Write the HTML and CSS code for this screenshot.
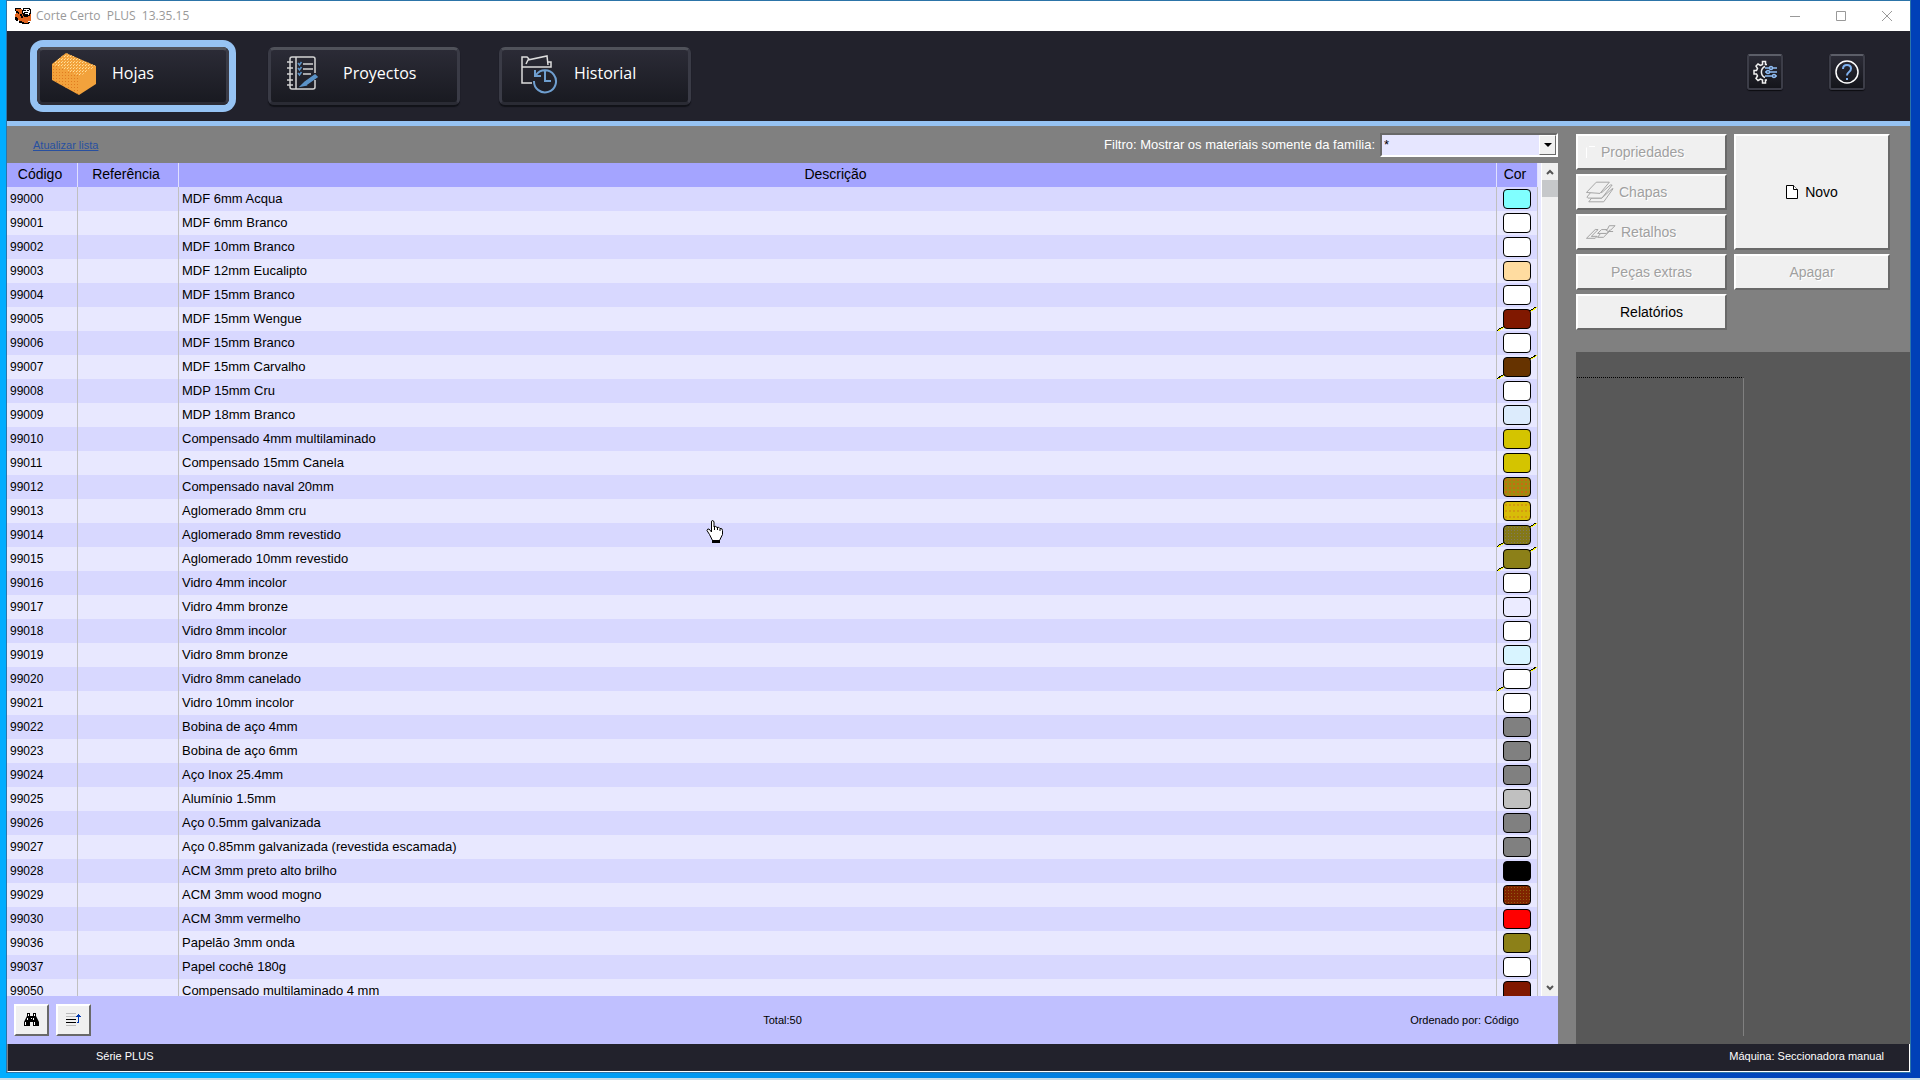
FILE: index.html
```html
<!DOCTYPE html>
<html lang="pt">
<head>
<meta charset="utf-8">
<title>Corte Certo PLUS 13.35.15</title>
<link rel="stylesheet" href="styles.css">
</head>
<body>
<div class="window">
  <header class="titlebar">
    <svg class="app-icon" width="16" height="16" viewBox="0 0 16 16" shape-rendering="crispEdges"><path fill="#e0641e" d="M1 1h6v4h9v8h-3v2H8v-1H4v-2H1V9H0V6h1z"/><path fill="#000" d="M0 0h6v1H1v2H0zM1 3h2v1h1v2H3V5H1zM0 9h2v1h1v3H1v-1H0zM4 13h3v1h2v1h4v-1h2v1h-1v1H7v-1H4zM8 0h7v1h1v5h-1v2h-2v1H9V8H8V6H7V2h1zM5 6h2v2h1v2H6V8H5z"/><path fill="#fff" d="M9 1h5v1h1v3h-1v2h-4V5H8V3h1z"/><path fill="#000" d="M9 2h2v1H9zM12 2h2v1h-2zM9 4h4v1H9zM10 6h3v1h-3z"/></svg>
    <span class="app-name">Corte Certo&nbsp; PLUS&nbsp; 13.35.15</span>
    <div class="win-controls">
      <button type="button" aria-label="Minimizar"><svg width="10" height="10"><path d="M0 5.500h10"/></svg></button>
      <button type="button" aria-label="Maximizar"><svg width="10" height="10"><path d="M.5.5h9v9h-9z"/></svg></button>
      <button type="button" aria-label="Fechar"><svg width="10" height="10"><path d="M0 0l10 10M10 0L0 10"/></svg></button>
    </div>
  </header>

  <div class="ribbon">
    <nav class="tabs">
      <button type="button" class="tab active">
        <svg width="44" height="42" viewBox="0 0 44 42"><path fill="#f2a23c" d="M0 11L14 0l30 13v18L27 42 0 27z"/><path fill="url(#dots-light)" d="M0 11L14 0l30 13-16 10z"/><path fill="url(#dots-dark)" d="M0 11l28 12-1 19L0 27z"/>
          <defs>
            <pattern id="dots-light" width="3" height="3" patternUnits="userSpaceOnUse"><path fill="#ffe2a0" d="M0 0h1v1H0z"/><path fill="#ffd080" d="M1 2h1v1H1z"/></pattern>
            <pattern id="dots-dark" width="3" height="3" patternUnits="userSpaceOnUse"><path fill="#e07c20" d="M1 1h1v1H1z"/></pattern>
          </defs>
        </svg>
        <span>Hojas</span>
      </button>
      <button type="button" class="tab">
        <svg width="44" height="42" viewBox="0 0 44 42" fill="none" stroke="#d4d4d4" stroke-width="1.500"><path d="M32 27v7q0 2-2 2H9q-2 0-2-2V6q0-2 2-2h21q2 0 2 2v14M13 4v32M4 9h6M4 15h6M4 21h6M4 27h6M4 32h6M20 11h10M20 16h10M20 21h8"/><path stroke="#5b93c8" d="M15 10l1.500 2 2-3M15 15l1.500 2 2-3M15 20l1.500 2 2-3"/><path fill="#5b93c8" stroke="#5b93c8" d="M22 29l10-7 2 2-10 7zM18 33l3-3 2 2z"/></svg>
        <span>Proyectos</span>
      </button>
      <button type="button" class="tab">
        <svg width="44" height="42" viewBox="0 0 44 42" fill="none" stroke="#dcdcdc" stroke-width="1.500"><path d="M18 30H8V4h5l2 2M8 14h29V9h-3M12 11l2-4 19-4 1 9"/><path stroke="#6f9fd0" stroke-width="2" d="M22 22a11 11 0 1 1-2 6M21 17v6h6M31 18v10h6"/></svg>
        <span>Historial</span>
      </button>
    </nav>
    <div class="tools">
      <button type="button" class="tool" aria-label="Configurações"><svg width="24" height="24" viewBox="0 0 24 24" fill="none" stroke="#f0f0f0" stroke-width="1.500"><path d="M12 6.500a6 6 0 0 0 0 11M14 4.500h-1.500V1.500h-3v3L7.500 5.500 5 4 3 6l1.500 2.500-1 2H1v3.500h2.500l1 2L3 18.500l2 2 2.500-1.500 2 1v3h3v-3H14"/><path stroke="#8fbcf2" d="M12 8h4M20 8h4M12 12h1M17 12h7M12 16h7M23 16h1"/><circle cx="18" cy="8" r="1.500" stroke="#8fbcf2"/><circle cx="15" cy="12" r="1.500" stroke="#8fbcf2"/><circle cx="21" cy="16" r="1.500" stroke="#8fbcf2"/></svg></button>
      <button type="button" class="tool" aria-label="Ajuda"><svg width="24" height="24" viewBox="0 0 24 24" fill="none" stroke="#fff" stroke-width="1.500"><circle cx="12" cy="12" r="11"/><path stroke="#7fb2f0" stroke-width="2" d="M8 9q0-4 4-4t4 3.500q0 2-2 3.500t-2 3.500M12 18v2"/></svg></button>
    </div>
  </div>

  <div class="main">
    <section class="list">
      <div class="filter-bar">
        <a href="#lista">Atualizar lista</a>
        <label for="familia">Filtro: Mostrar os materiais somente da família:</label>
        <div class="select-box">
          <select id="familia"><option>*</option></select>
          <span class="drop"><svg width="8" height="4"><path d="M0 0h8L4 4z"/></svg></span>
        </div>
      </div>

      <div class="grid-area" id="lista">
        <div class="grid-view">
          <table>
            <colgroup><col class="c-code"><col class="c-ref"><col><col class="c-color"></colgroup>
            <thead><tr><th>Código</th><th>Referência</th><th>Descrição</th><th>Cor</th></tr></thead>
            <tbody>
              <tr><td>99000</td><td></td><td>MDF 6mm Acqua</td><td><i class="aqua"></i></td></tr>
              <tr><td>99001</td><td></td><td>MDF 6mm Branco</td><td><i></i></td></tr>
              <tr><td>99002</td><td></td><td>MDF 10mm Branco</td><td><i></i></td></tr>
              <tr><td>99003</td><td></td><td>MDF 12mm Eucalipto</td><td><i class="peach"></i></td></tr>
              <tr><td>99004</td><td></td><td>MDF 15mm Branco</td><td><i></i></td></tr>
              <tr><td>99005</td><td></td><td>MDF 15mm Wengue</td><td class="grain"><i class="maroon"></i></td></tr>
              <tr><td>99006</td><td></td><td>MDF 15mm Branco</td><td><i></i></td></tr>
              <tr><td>99007</td><td></td><td>MDF 15mm Carvalho</td><td class="grain"><i class="brown"></i></td></tr>
              <tr><td>99008</td><td></td><td>MDP 15mm Cru</td><td><i></i></td></tr>
              <tr><td>99009</td><td></td><td>MDP 18mm Branco</td><td><i class="ice"></i></td></tr>
              <tr><td>99010</td><td></td><td>Compensado 4mm multilaminado</td><td><i class="yellow"></i></td></tr>
              <tr><td>99011</td><td></td><td>Compensado 15mm Canela</td><td><i class="yellow"></i></td></tr>
              <tr><td>99012</td><td></td><td>Compensado naval 20mm</td><td><i class="naval"></i></td></tr>
              <tr><td>99013</td><td></td><td>Aglomerado 8mm cru</td><td><i class="raw"></i></td></tr>
              <tr><td>99014</td><td></td><td>Aglomerado 8mm revestido</td><td class="grain"><i class="coated"></i></td></tr>
              <tr><td>99015</td><td></td><td>Aglomerado 10mm revestido</td><td class="grain"><i class="olive"></i></td></tr>
              <tr><td>99016</td><td></td><td>Vidro 4mm incolor</td><td><i></i></td></tr>
              <tr><td>99017</td><td></td><td>Vidro 4mm bronze</td><td><i class="lilac"></i></td></tr>
              <tr><td>99018</td><td></td><td>Vidro 8mm incolor</td><td><i></i></td></tr>
              <tr><td>99019</td><td></td><td>Vidro 8mm bronze</td><td><i class="sky"></i></td></tr>
              <tr><td>99020</td><td></td><td>Vidro 8mm canelado</td><td class="grain"><i></i></td></tr>
              <tr><td>99021</td><td></td><td>Vidro 10mm incolor</td><td><i></i></td></tr>
              <tr><td>99022</td><td></td><td>Bobina de aço 4mm</td><td><i class="gray"></i></td></tr>
              <tr><td>99023</td><td></td><td>Bobina de aço 6mm</td><td><i class="gray"></i></td></tr>
              <tr><td>99024</td><td></td><td>Aço Inox 25.4mm</td><td><i class="gray"></i></td></tr>
              <tr><td>99025</td><td></td><td>Alumínio 1.5mm</td><td><i class="silver"></i></td></tr>
              <tr><td>99026</td><td></td><td>Aço 0.5mm galvanizada</td><td><i class="gray"></i></td></tr>
              <tr><td>99027</td><td></td><td>Aço 0.85mm galvanizada (revestida escamada)</td><td><i class="gray"></i></td></tr>
              <tr><td>99028</td><td></td><td>ACM 3mm preto alto brilho</td><td><i class="black"></i></td></tr>
              <tr><td>99029</td><td></td><td>ACM 3mm wood mogno</td><td><i class="mahogany"></i></td></tr>
              <tr><td>99030</td><td></td><td>ACM 3mm vermelho</td><td><i class="red"></i></td></tr>
              <tr><td>99036</td><td></td><td>Papelão 3mm onda</td><td><i class="olive"></i></td></tr>
              <tr><td>99037</td><td></td><td>Papel cochê 180g</td><td><i></i></td></tr>
              <tr><td>99050</td><td></td><td>Compensado multilaminado 4 mm</td><td><i class="maroon"></i></td></tr>
            </tbody>
          </table>
        </div>
        <div class="scrollbar">
          <button type="button" aria-label="Subir"><svg width="8" height="6"><path d="M1 5l3-3 3 3"/></svg></button>
          <div class="thumb"></div>
          <button type="button" class="down" aria-label="Descer"><svg width="8" height="6"><path d="M1 1l3 3 3-3"/></svg></button>
        </div>
      </div>

      <footer class="list-footer">
        <div class="list-actions">
          <button type="button" class="raised" aria-label="Localizar"><svg width="15" height="14" viewBox="0 0 15 14"><path d="M3 0h3v3h3V0h3v3l1 2 2 4v4H9V9H6v4H0V9l2-4 1-2z"/><path fill="#fff" d="M4 1h1v2H4zM10 1h1v2h-1zM3 5h1v2H3zM9 5h1v2H9zM1 9h1v3H1zM10 9h1v3h-1zM7 5h1v1H7z"/></svg></button>
          <button type="button" class="raised" aria-label="Ordenar"><svg width="16" height="14" viewBox="0 0 16 14" fill="none"><path stroke="#bbb" d="M0 .5h10M0 3.500h10M0 12.500h10"/><path stroke="#000" d="M0 6.500h10M0 9.500h10"/><path stroke="#0038b0" d="M12.500 1v9M10 3.500h5M11 2.500h3M11 9.500h2"/></svg></button>
        </div>
        <span>Total:50</span>
        <span class="order">Ordenado por: Código</span>
      </footer>
    </section>

    <aside class="side">
      <div class="actions">
        <button type="button" class="raised left" disabled><svg width="10" height="12" fill="none" stroke="#fff"><path d="M.5 12V1.500M3 .5h6"/></svg>Propriedades</button>
        <button type="button" class="raised new"><svg width="12" height="14" viewBox="0 0 12 14" fill="#fff" stroke="#000"><path d="M.5.500h7l4 4v9H.5z"/><path d="M7.500.500v4h4"/></svg>Novo</button>
        <button type="button" class="raised left" disabled><svg width="28" height="22" viewBox="0 0 30 22" fill="#f0f0f0" stroke="#a0a0a0"><path d="M3 21.500l3-4h11l11-10h1l-10 14z"/><path d="M1 16.500l4-5h12l9-8h2L17 17.500H2z"/><path d="M.5 11.500L11 .5h14L15 12.500z"/></svg>Chapas</button>
        <button type="button" class="raised left" disabled><svg width="30" height="14" viewBox="0 0 31 14" fill="#f0f0f0" stroke="#a0a0a0"><path d="M.5 13.500l9-9h3l-7 7h6l-2 2zM12 8.500l4-4h6l2-4h6l-5 5-7 7h-6l3-4zM20 4.500l3 2h5M15 8.500h6l4-4"/></svg>Retalhos</button>
        <button type="button" class="raised" disabled>Peças extras</button>
        <button type="button" class="raised" disabled>Apagar</button>
        <button type="button" class="raised">Relatórios</button>
      </div>
      <div class="preview"><div class="sheet"></div></div>
    </aside>
  </div>

  <footer class="status"><span>Série PLUS</span><span>Máquina: Seccionadora manual</span></footer>
</div>
<svg class="pointer" width="18" height="24" viewBox="0 0 18 24"><path fill="#fff" stroke="#000" d="M5.500 12V2q0-1.500 1-1.500T8 2v5q2-1.500 3 .5 2-1 3 1 2.500-.5 2.500 2v4l-3 6h-7l-3-6-2.500-4q.5-2 2-1.500z"/><path stroke="#000" fill="none" d="M8.500 6v4M11.500 7v3M14 8.500V11"/><path d="M6 20h8v3H6z"/></svg>
</body>
</html>
```

FILE: styles.css
```css
* { box-sizing: border-box; }

body {
  margin: 0;
  height: 100vh;
  display: flex;
  padding: 0 9px 5px 6px;
  border-bottom: 2px solid #c8dce8;
  background: linear-gradient(to right, #00adff 0, #00adff 20%, #0078dc 60%, #0040b8 95%);
  font: 14px/18px "Liberation Sans", Arial, sans-serif;
  color: #000;
  overflow: hidden;
}

button { font: inherit; color: inherit; }

.window {
  flex: 1;
  min-width: 0;
  display: flex;
  flex-direction: column;
  border: 1px solid #2c74a8;
  background: #808080;
}

/* Title bar */
.titlebar {
  height: 30px;
  display: flex;
  align-items: center;
  padding-left: 8px;
  gap: 5px;
  background: #fff;
}
.app-name { font: 12px/16px "Noto Sans", "Open Sans", sans-serif; color: #999; }
.app-name { font-family: "Open Sans", "Noto Sans", sans-serif; }
.win-controls { display: flex; margin-left: auto; }
.win-controls button {
  width: 46px;
  height: 30px;
  padding: 0;
  border: 0;
  background: none;
  display: grid;
  place-items: center;
}
.win-controls svg { fill: none; stroke: #999; }

/* Main navigation */
.ribbon {
  height: 95px;
  display: flex;
  align-items: flex-start;
  justify-content: space-between;
  padding: 16px 45px 0 30px;
  background: #22222c;
  border-bottom: 5px solid #96c3f3;
}
.tabs { display: flex; gap: 39px; }
.tab {
  width: 192px;
  height: 58px;
  display: flex;
  align-items: center;
  gap: 16px;
  padding: 0 0 4px 12px;
  border: 3px solid #3a3b46;
  border-top-color: #50525a;
  border-bottom-color: #2a2b34;
  border-radius: 6px;
  background: linear-gradient(#2b2b36, #191a21);
  box-shadow: 0 2px 1px #111218;
  color: #fff;
  font: 16px/20px "Open Sans", "Noto Sans", sans-serif;
}
.tab span { padding-bottom: 2px; }
.tab.active { box-shadow: 0 0 0 7px #96c3f3; }
.tools { display: flex; gap: 46px; margin-top: 7px; }
.tool {
  width: 36px;
  height: 36px;
  padding: 0;
  display: grid;
  place-items: center;
  border: 2px solid #3c3d48;
  border-top-color: #5c5e68;
  border-radius: 3px;
  background: linear-gradient(#2b2b36, #14151b);
  box-shadow: 0 1px 1px #0c0c10;
}

.main { flex: 1; min-height: 0; display: flex; }
.list { flex: 1; min-width: 0; display: flex; flex-direction: column; }

/* Filter row */
.filter-bar {
  height: 37px;
  display: flex;
  align-items: center;
  padding-left: 26px;
  font-size: 13px;
  color: #fff;
}
.filter-bar a { margin-right: auto; font-size: 11px; color: #2850a0; }
.select-box { position: relative; width: 178px; margin-left: 5px; }
.select-box select {
  display: block;
  width: 100%;
  height: 24px;
  padding: 0 2px;
  appearance: none;
  border: 2px solid;
  border-color: #696969 #fff #fff #696969;
  border-radius: 0;
  background: #e6e6ff;
  color: #000;
  font: 13px/18px "Liberation Sans", Arial, sans-serif;
}
.drop {
  position: absolute;
  top: 2px;
  right: 2px;
  width: 17px;
  height: 20px;
  display: grid;
  place-items: center;
  pointer-events: none;
  background: #f0f0f0;
  border: 1px solid;
  border-color: #fff #696969 #696969 #fff;
}

/* Materials table */
.grid-area { flex: 1; min-height: 0; display: flex; background: #e8e8ff; }
.grid-view { flex: 1; min-width: 0; overflow: hidden; padding-right: 3px; }
table { width: 100%; table-layout: fixed; border-collapse: separate; border-spacing: 0; }
.c-code { width: 71px; }
.c-ref { width: 101px; }
.c-color { width: 41px; }
th {
  height: 24px;
  padding: 0 4px 2px 0;
  background: #a4a4ff;
  border-right: 1px solid #e0e0ff;
  font-weight: 400;
}
td {
  height: 24px;
  padding: 0 3px;
  background: #e8e8ff;
  border-right: 1px solid #c0c0c0;
  font-size: 13px;
  white-space: nowrap;
}
tr:nth-child(odd) td { background-color: #d8d8ff; }
td:first-child { font-size: 12px; }
td:last-child { padding: 0 6px; }
td i {
  display: block;
  width: 28px;
  height: 20px;
  border: 1px solid #000;
  border-radius: 4px;
  background: #fff;
}
td.grain {
  background-image: linear-gradient(to bottom right, transparent calc(50% - 1px), #000 calc(50% - 1px), #000 50%, #ff0 50%, #ff0 calc(50% + 1px), transparent calc(50% + 1px));
}
td .aqua { background: #80ffff; }
td .peach { background: #ffdca0; }
td .maroon { background: #801800; }
td .brown { background: #663300; }
td .ice { background: #dcebfc; }
td .yellow { background: #d4c400; }
td .naval { background: radial-gradient(#c86c10 1px, transparent 1px) 0 0 / 4px 4px #a08a10; }
td .raw { background: radial-gradient(#d49c10 1px, transparent 1px) 0 0 / 4px 6px #d8bc08; }
td .coated { background: radial-gradient(#807a60 1px, transparent 1px) 0 0 / 3px 3px #847818; }
td .olive { background: #8c8018; }
td .lilac { background: #ebebff; }
td .sky { background: #d8f4ff; }
td .gray { background: #808080; }
td .silver { background: #c0c0c0; }
td .black { background: #000; }
td .mahogany { background: radial-gradient(#906010 1px, transparent 1px) 0 0 / 3px 3px #802400; }
td .red { background: #f00; }

.scrollbar {
  width: 17px;
  display: flex;
  flex-direction: column;
  background: #f0f0f0;
  border-left: 1px solid #fff;
}
.scrollbar button {
  height: 17px;
  padding: 0;
  border: 0;
  background: none;
  display: grid;
  place-items: center;
}
.scrollbar svg { fill: none; stroke: #555; stroke-width: 2; }
.thumb { height: 17px; background: #c6c8ca; }
.scrollbar .down { margin-top: auto; }

.list-footer {
  height: 48px;
  display: grid;
  grid-template-columns: 1fr auto 1fr;
  align-items: center;
  padding: 0 7px;
  background: #c0c0ff;
  font-size: 11px;
}
.list-actions { display: flex; gap: 7px; }
.list-actions .raised { width: 35px; height: 32px; }
.order { text-align: right; padding-right: 32px; }

/* Raised push buttons */
.raised {
  display: flex;
  align-items: center;
  justify-content: center;
  gap: 7px;
  padding: 0;
  background: #f0f0f0;
  border: 2px solid;
  border-color: #fff #696969 #696969 #fff;
}
.raised:disabled { color: #a0a0a0; text-shadow: 1px 1px #fff; }
.raised.left { justify-content: flex-start; gap: 5px; padding-left: 8px; }

/* Side panel */
.side { width: 336px; margin-left: 16px; display: flex; flex-direction: column; }
.actions {
  display: grid;
  grid-template-columns: 151px 156px;
  grid-auto-rows: 36px;
  gap: 4px 7px;
  padding: 8px 0 22px 2px;
}
.new { grid-column: 2; grid-row: 1 / span 3; }
.preview {
  flex: 1;
  margin-left: 2px;
  padding: 25px 166px 8px 1px;
  background: #585858;
}
.sheet { height: 100%; border-top: 1px dotted #000; border-right: 1px solid #808080; }

/* Status bar */
.status {
  height: 28px;
  display: flex;
  justify-content: space-between;
  padding: 3px 25px 0 88px;
  background: #22222c;
  border: solid #fff;
  border-width: 0 1px 1px;
  border-left-color: #808080;
  color: #fff;
  font-size: 11px;
}

.pointer { position: absolute; left: 706px; top: 520px; }
```
